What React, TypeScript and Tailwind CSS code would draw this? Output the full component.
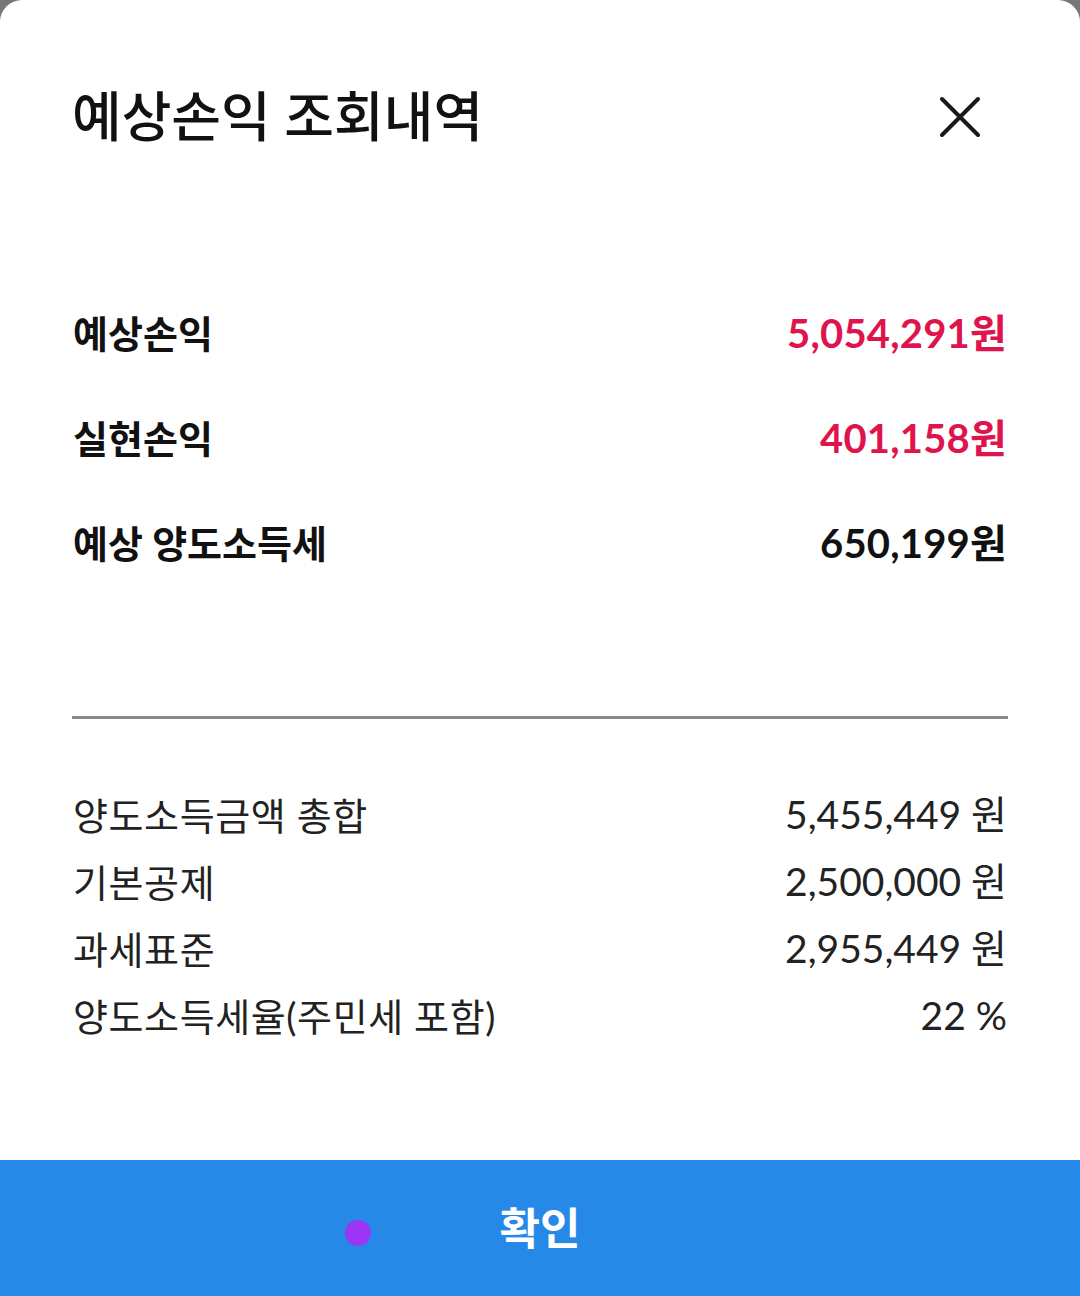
import React from "react";

interface Row {
  label: string;
  value: string;
  red?: boolean;
}

const summaryRows: Row[] = [
  { label: "예상손익", value: "5,054,291원", red: true },
  { label: "실현손익", value: "401,158원", red: true },
  { label: "예상 양도소득세", value: "650,199원" },
];

const detailRows: Row[] = [
  { label: "양도소득금액 총합", value: "5,455,449 원" },
  { label: "기본공제", value: "2,500,000 원" },
  { label: "과세표준", value: "2,955,449 원" },
  { label: "양도소득세율(주민세 포함)", value: "22 %" },
];

const font = "font-['Lato','Noto_Sans_CJK_KR',sans-serif]";

export default function App() {
  return (
    <div className={`w-full h-[1296px] bg-[#777777] flex flex-col ${font}`}>
      <div className="flex-1 bg-white rounded-t-[22px] flex flex-col">
        {/* 헤더 */}
        <div className="h-[234px] flex items-center justify-between pl-[72px] pr-[99px]">
          <h1 className="text-[54px] font-medium leading-none text-[#111111]">
            예상손익 조회내역
          </h1>
          <button className="w-[42px] h-[42px] flex items-center justify-center">
            <svg width="42" height="42" viewBox="0 0 42 42" fill="none">
              <path
                d="M3 3L39 39M39 3L3 39"
                stroke="#1a1a1a"
                strokeWidth="4"
                strokeLinecap="round"
              />
            </svg>
          </button>
        </div>

        {/* 요약 */}
        <div className="mt-[46px] px-[73px]">
          {summaryRows.map((row) => (
            <div key={row.label} className="h-[105px] flex items-center justify-between">
              <span className="text-[38px] font-bold leading-none text-[#111111]">
                {row.label}
              </span>
              <span
                className={`text-[40px] font-bold leading-none tracking-[0.2px] ${
                  row.red ? "text-[#e0144c]" : "text-[#111111]"
                }`}
              >
                {row.value}
              </span>
            </div>
          ))}
        </div>

        <div className="mt-[121px] mx-[72px] h-[3px] bg-[#888888]" />

        {/* 상세 */}
        <div className="mt-[62px] px-[73px]">
          {detailRows.map((row) => (
            <div key={row.label} className="h-[67px] flex items-center justify-between">
              <span className="text-[38px] leading-none text-[#222222] tracking-[0.6px]">
                {row.label}
              </span>
              <span className="text-[39px] leading-none text-[#222222]">
                {row.value}
              </span>
            </div>
          ))}
        </div>

        <button className="mt-auto relative h-[136px] w-full bg-[#2689e8] flex items-center justify-center">
          <span className="text-[44px] font-bold leading-none text-white">확인</span>
          <span className="absolute left-[345px] top-[60px] w-[26px] h-[26px] rounded-full bg-[#9b36f5]" />
        </button>
      </div>
    </div>
  );
}
